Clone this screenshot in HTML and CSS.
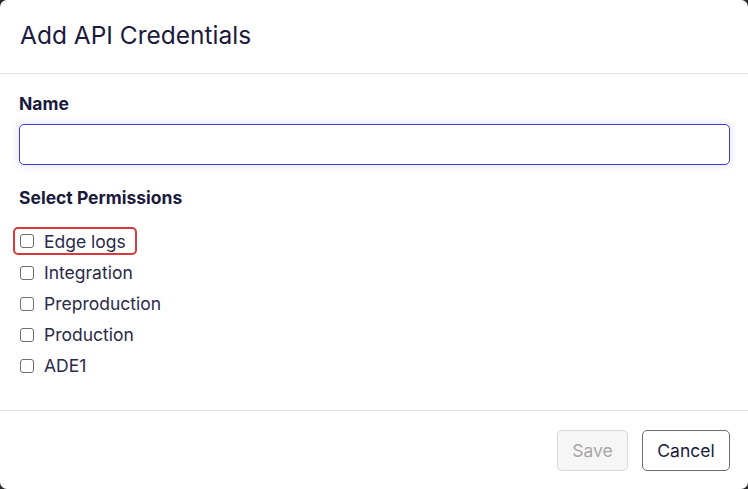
FILE: index.html
```html
<!DOCTYPE html>
<html lang="en">
<head>
<meta charset="utf-8">
<title>Add API Credentials</title>
<link rel="stylesheet" href="styles.css">
</head>
<body>
<div class="modal">
  <div class="modal-header">
    <h1 class="modal-title">Add API Credentials</h1>
  </div>
  <div class="modal-body">
    <label class="field-label" for="name">Name</label>
    <input class="text-input" id="name" type="text">
    <div class="section-label">Select Permissions</div>
    <ul class="perm-list">
      <li class="perm-row highlighted"><span class="check"></span><span class="perm-text">Edge logs</span></li>
      <li class="perm-row"><span class="check"></span><span class="perm-text">Integration</span></li>
      <li class="perm-row"><span class="check"></span><span class="perm-text">Preproduction</span></li>
      <li class="perm-row"><span class="check"></span><span class="perm-text">Production</span></li>
      <li class="perm-row"><span class="check"></span><span class="perm-text">ADE1</span></li>
    </ul>
  </div>
  <div class="modal-footer">
    <button class="btn btn-disabled" type="button">Save</button>
    <button class="btn btn-outline" type="button">Cancel</button>
  </div>
</div>
</body>
</html>
```

FILE: styles.css
```css
* { box-sizing: border-box; }
html, body { margin: 0; padding: 0; }
body {
  background: #2a2a2a;
  font-family: Inter, "Noto Sans", sans-serif;
  color: #1b1a3c;
  width: 748px;
  height: 489px;
  overflow: hidden;
}
.modal {
  width: 748px;
  height: 489px;
  background: #fff;
  border-radius: 7px;
  display: flex;
  flex-direction: column;
}
.modal-header {
  padding: 20px 20px 0 20px;
  height: 74px;
  border-bottom: 1px solid #e2e2e6;
}
.modal-title {
  margin: 0;
  font-size: 24.5px;
  font-weight: 400;
  line-height: 30px;
  color: #1b1a3c;
}
.modal-body {
  padding: 18px 18px 0 19px;
  height: 337px;
  border-bottom: 1px solid #e2e2e6;
}
.field-label, .section-label {
  display: block;
  font-size: 17.5px;
  font-weight: 700;
  line-height: 24px;
  color: #1b1a3c;
}
.text-input {
  display: block;
  margin-top: 8px;
  width: 711px;
  height: 41px;
  border: 1px solid #3e3fc8;
  border-radius: 5px;
  box-shadow: 0 0 6px 2px rgba(90, 100, 230, 0.14);
  outline: none;
  font: inherit;
  padding: 0 12px;
}
.section-label { margin-top: 21px; }
.perm-list {
  list-style: none;
  margin: 17px 0 0 0;
  padding: 0;
}
.perm-row {
  display: flex;
  align-items: center;
  gap: 10px;
  height: 31px;
  padding-left: 1px;
  font-size: 17.5px;
  color: #2b2a4a;
}
.perm-row.highlighted {
  width: 124px;
  height: 28px;
  margin: 2px 0 2px -6px;
  padding-left: 5px;
  border: 2px solid #d63a3f;
  border-radius: 5px;
}
.check {
  width: 14px;
  height: 14px;
  border: 1px solid #6e6e72;
  border-radius: 3px;
  background: #fff;
  flex: none;
}
.modal-footer {
  flex: 1;
  display: flex;
  justify-content: flex-end;
  align-items: flex-start;
  gap: 14px;
  padding: 19px 18px 0 0;
}
.btn {
  height: 41px;
  padding: 0;
  font: inherit;
  font-size: 17.5px;
  border-radius: 5px;
  background: #fff;
}
.btn-disabled {
  width: 71px;
  background: #f6f6f6;
  border: 1px solid #d9d9d9;
  color: #a6a6a6;
}
.btn-outline {
  width: 88px;
  border: 1px solid #6c6c76;
  color: #1b1a3c;
}
```
